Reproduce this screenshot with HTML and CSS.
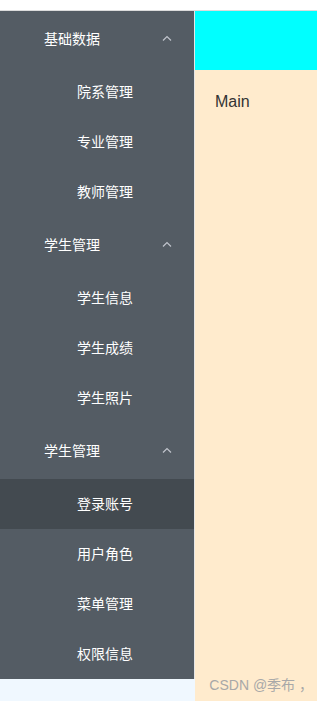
FILE: index.html
```html
<!DOCTYPE html>
<html lang="zh-CN">
<head>
    <meta charset="UTF-8">
    <meta name="viewport" content="width=device-width, initial-scale=1.0">
    <title>Layout</title>
    <link rel="stylesheet" href="styles.css">
</head>
<body>
    <div class="container">
        <aside class="aside">
            <ul class="menu">
                <li class="submenu">
                    <div class="submenu-title">基础数据
                        <svg class="arrow" width="10" height="6" viewBox="0 0 10 6"><path d="M1 5.5L5 1.5L9 5.5" fill="none" stroke="#c0c4cc" stroke-width="1.2"/></svg>
                    </div>
                    <ul>
                        <li class="menu-item">院系管理</li>
                        <li class="menu-item">专业管理</li>
                        <li class="menu-item">教师管理</li>
                    </ul>
                </li>
                <li class="submenu">
                    <div class="submenu-title">学生管理
                        <svg class="arrow" width="10" height="6" viewBox="0 0 10 6"><path d="M1 5.5L5 1.5L9 5.5" fill="none" stroke="#c0c4cc" stroke-width="1.2"/></svg>
                    </div>
                    <ul>
                        <li class="menu-item">学生信息</li>
                        <li class="menu-item">学生成绩</li>
                        <li class="menu-item">学生照片</li>
                    </ul>
                </li>
                <li class="submenu">
                    <div class="submenu-title">学生管理
                        <svg class="arrow" width="10" height="6" viewBox="0 0 10 6"><path d="M1 5.5L5 1.5L9 5.5" fill="none" stroke="#c0c4cc" stroke-width="1.2"/></svg>
                    </div>
                    <ul>
                        <li class="menu-item active">登录账号</li>
                        <li class="menu-item">用户角色</li>
                        <li class="menu-item">菜单管理</li>
                        <li class="menu-item">权限信息</li>
                    </ul>
                </li>
            </ul>
        </aside>
        <section class="content">
            <header class="header"></header>
            <main class="main">Main</main>
        </section>
    </div>
    <div class="watermark">CSDN @季布 ，</div>
</body>
</html>
```

FILE: styles.css
```css
html, body {
    height: 100%;
}
body {
    margin: 0;
    padding-top: 10px;
    box-sizing: border-box;
    font-family: "Noto Sans CJK SC", "Liberation Sans", sans-serif;
    font-size: 14px;
    background-color: #fff;
}
ul {
    list-style: none;
    margin: 0;
    padding: 0;
}
.container {
    display: flex;
    height: 100%;
    border-top: 1px solid #dcdcdc;
    box-sizing: border-box;
}
.aside {
    width: 195px;
    flex-shrink: 0;
    background-color: #f0f8ff;
}
.menu {
    background-color: #545c64;
    border-right: 1px solid #e6e6e6;
}
.submenu-title {
    position: relative;
    height: 56px;
    line-height: 54px;
    padding-left: 44px;
    color: #fff;
}
.arrow {
    position: absolute;
    right: 22px;
    top: 24px;
}
.menu-item {
    height: 50px;
    line-height: 48px;
    padding-left: 77px;
    color: #fff;
}
.menu-item.active {
    background-color: #434a50;
}
.content {
    flex: 1;
    display: flex;
    flex-direction: column;
}
.header {
    height: 59px;
    background-color: #00ffff;
}
.main {
    flex: 1;
    padding: 20px;
    background-color: #ffebcd;
    color: #333;
    font-family: "Liberation Sans", sans-serif;
    font-size: 16px;
    line-height: 24px;
}
.watermark {
    position: absolute;
    right: 4px;
    bottom: 7px;
    color: #a8a8a8;
    font-family: "Liberation Sans", "Noto Sans CJK SC", sans-serif;
    font-size: 14px;
}
```
